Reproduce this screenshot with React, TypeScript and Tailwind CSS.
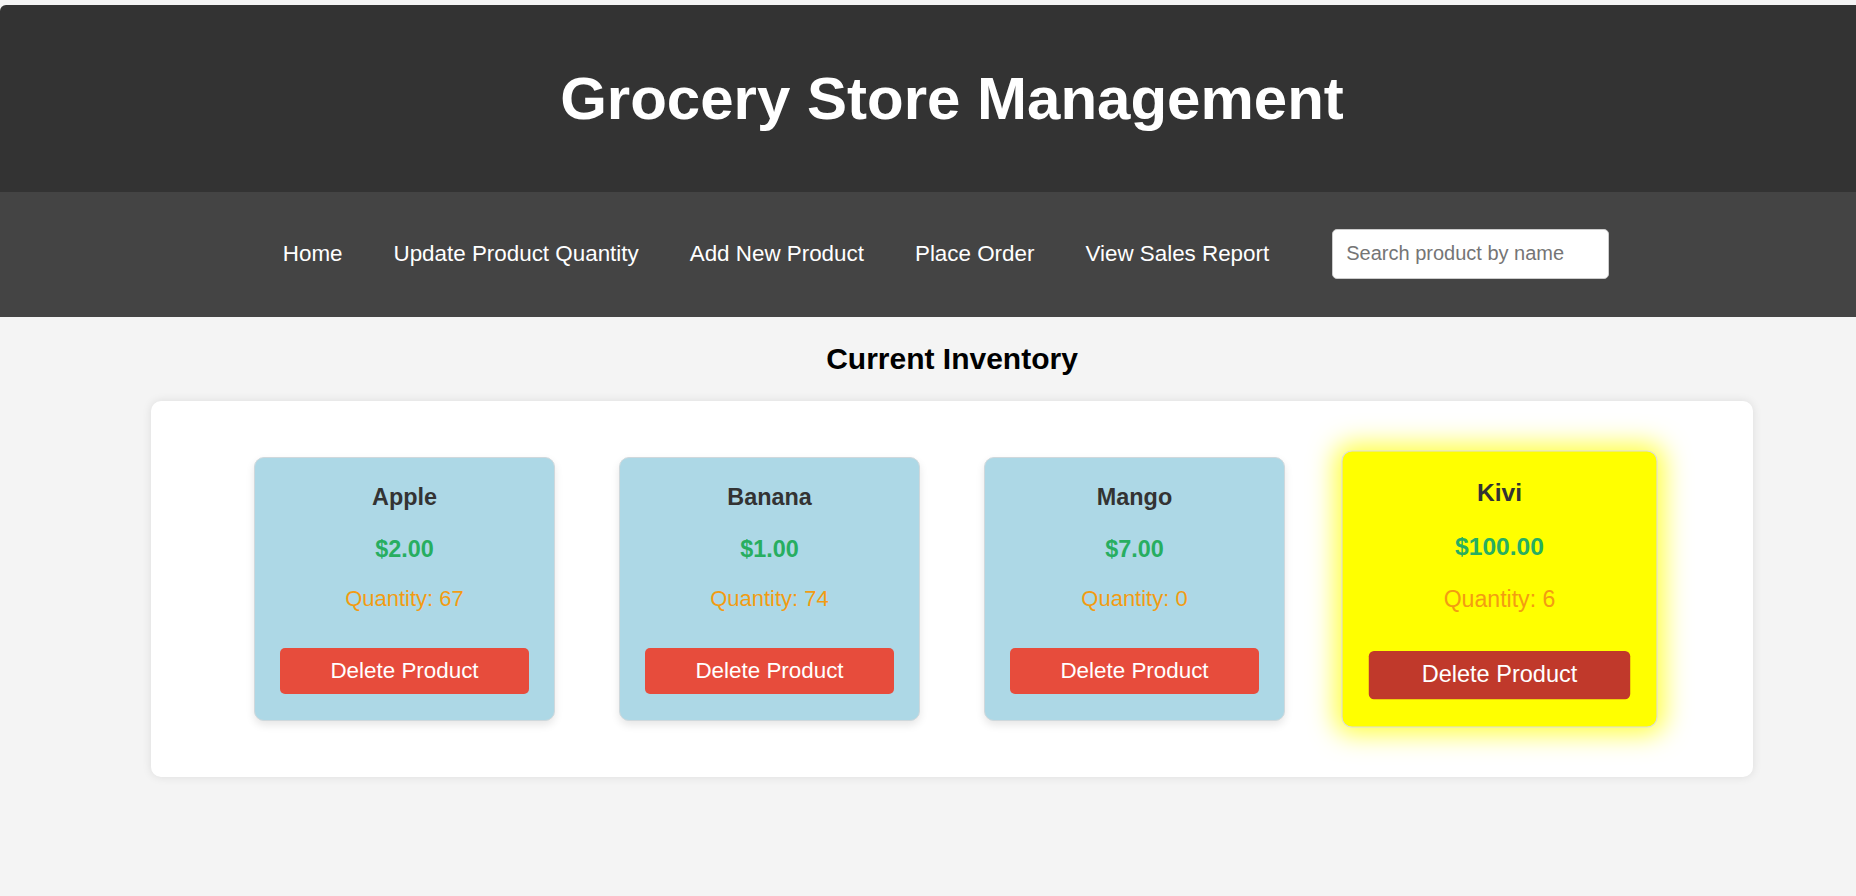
import React from "react";

type Product = { name: string; price: string; qty: number; highlight?: boolean };

const products: Product[] = [
  { name: "Apple", price: "$2.00", qty: 67 },
  { name: "Banana", price: "$1.00", qty: 74 },
  { name: "Mango", price: "$7.00", qty: 0 },
  { name: "Kivi", price: "$100.00", qty: 6, highlight: true },
];

function Card({ p }: { p: Product }) {
  const base =
    "w-[301px] flex flex-col items-center rounded-[10px] border px-[25px] pt-[26px] pb-[26px] text-center";
  const cls = p.highlight
    ? `${base} bg-[#ffff00] border-[#dddddd] scale-[1.05] shadow-[0_0_24px_6px_rgba(255,255,0,0.75)]`
    : `${base} bg-[#add8e6] border-[#cfd8dc] shadow-[0_4px_8px_rgba(0,0,0,0.1)]`;
  return (
    <div className={cls}>
      <div className="text-[23.4px] leading-[27px] font-bold text-[#333333]">{p.name}</div>
      <div className="mt-[25px] text-[23.4px] leading-[26px] font-bold text-[#27ae60]">{p.price}</div>
      <div className="mt-[24px] text-[22px] leading-[26px] text-[#f39c12]">Quantity: {p.qty}</div>
      <button
        className={`mt-[36px] h-[46px] w-full rounded-[5px] text-[22.4px] text-white ${
          p.highlight ? "bg-[#c0392b]" : "bg-[#e74c3c]"
        }`}
      >
        Delete Product
      </button>
    </div>
  );
}

export default function App() {
  const links = ["Home", "Update Product Quantity", "Add New Product", "Place Order", "View Sales Report"];
  return (
    <div
      className="min-h-[896px] w-full overflow-hidden bg-[#f4f4f4] pt-[5px]"
      style={{ fontFamily: '"Liberation Sans", Arial, sans-serif' }}
    >
      <header className="flex h-[187px] items-center justify-center rounded-tl-[6px] bg-[#333333] pl-[48px]">
        <h1 className="text-[60px] leading-[69px] font-bold text-white">Grocery Store Management</h1>
      </header>
      <nav className="flex h-[125px] items-center justify-center bg-[#444444] pb-[2px] pl-[36px]">
        <div className="flex items-center gap-[51px]">
          {links.map((l) => (
            <a key={l} className="cursor-pointer text-[22.4px] leading-[26px] text-white">
              {l}
            </a>
          ))}
        </div>
        <input
          placeholder="Search product by name"
          className="ml-[63px] h-[50px] w-[277px] rounded-[5px] border border-[#cccccc] bg-white px-[13px] text-[20px] text-black outline-none placeholder:text-[#757575]"
        />
      </nav>
      <main className="flex flex-col items-center pl-[48px] pt-[24px]">
        <h2 className="text-[30px] leading-[35px] font-bold text-black">Current Inventory</h2>
        <div className="mt-[25px] flex w-[1602px] justify-center gap-[64px] rounded-[10px] bg-white py-[56px] shadow-[0_0_10px_rgba(0,0,0,0.1)]">
          {products.map((p) => (
            <Card key={p.name} p={p} />
          ))}
        </div>
      </main>
    </div>
  );
}
